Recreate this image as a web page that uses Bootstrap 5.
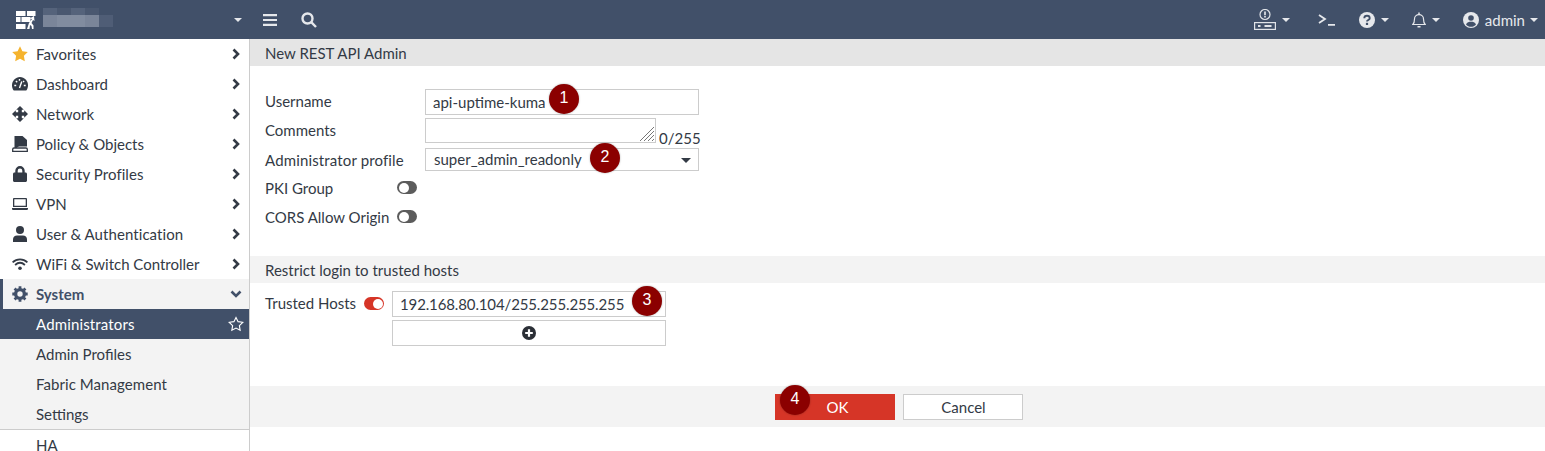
<!DOCTYPE html>
<html lang="en"><head><meta charset="utf-8"><title>New REST API Admin</title>
<link href="https://cdn.jsdelivr.net/npm/bootstrap@5.3.0/dist/css/bootstrap.min.css" rel="stylesheet">
<style>
html,body{height:451px;overflow:hidden;background:#fff;}
body{font-family:Lato,"Liberation Sans",sans-serif;font-size:15px;color:#333a45;line-height:18px;}
.top-bar{height:39px;background:#415069;color:#e6e8ec;}
.brand-zone{width:249px;padding-left:16px;flex:none;}
.fort-logo{width:20px;height:18px;flex:none;}
.blur-name{margin-left:7px;width:70px;display:grid;grid-template-columns:14px 14px 14px 14px 14px;grid-template-rows:7px 12px;margin-top:-4px;}
.bz1{background:#55637b;}.bz2{background:#4a5870;}.bz3{background:#7a8599;}.bz4{background:#818c9f;}.bz5{background:#4f5d76;}.bz0{background:transparent;}
.caret-w{width:0;height:0;border-left:4px solid transparent;border-right:4px solid transparent;border-top:4px solid #e6e8ec;flex:none;}
.c-brand{margin-right:7px;}
.t-menu{margin-left:14px;}.t-search{margin-left:24px;}
.t-server{margin-right:6px;}.t-term{margin-left:28px;}.t-help{margin-left:24px;margin-right:6px;}
.t-bell{margin-left:23px;margin-right:6px;}.t-user{margin-left:23px;margin-right:6px;}.t-name{margin-right:5px;}.c-last{margin-right:7px;}
.body-row{height:412px;}
.side-col{width:250px;flex:none;border-right:1px solid #ccc;overflow:hidden;}
.side-item{height:30px;padding:0 8px 0 12px;}
.ico{width:16px;height:16px;margin-right:8px;flex:none;fill:#333a45;}
.ico-star{fill:#f5b32e;}
.ico-sys{fill:none;stroke:#415069;}
.ico-line{fill:none;stroke:#333a45;stroke-width:1.800;}
.side-item .lbl{flex:1;}
.chev{width:10px;height:12px;fill:none;stroke:#333a45;stroke-width:2.600;flex:none;}
.chev-down{width:12px;stroke:#415069;margin-right:-1px;}
.side-open{background:#f3f3f3;border-left:3px solid #415069;padding-left:9px;font-weight:700;color:#415069;}
.side-sub{background:#f3f3f3;padding-left:36px;}
.side-active{background:#415069;color:#fff;padding-right:5px;}
.fav-off{fill:none;stroke:#fff;stroke-width:1.200;flex:none;}
.side-sep{border-top:1px solid #ccc;height:31px;padding-left:36px;}
.wide-1{letter-spacing:.07px;}.wide-2{letter-spacing:.14px;}.tight-1{letter-spacing:-.13px;}
.main-col{flex:1;min-width:0;position:relative;}
.head-a{height:27px;background:#e5e5e5;padding-left:15px;}
.head-b{height:27px;background:#f3f3f3;padding-left:15px;margin-top:25px;}
.form-a{padding:23px 0 0 15px;}
.form-b{padding:8px 0 0 15px;}
.lbl-col{width:160px;flex:none;}
.lift-2{margin-top:-2px;}.drop-3{margin-top:3px;}
.fld{border:1px solid #ccc;background:#fff;padding:0 7px;color:#333a45;}
.fld-sel{padding:0 8px;}
.w-fld{width:274px;}
.row-user{height:26px;}
.row-comm{height:25px;margin-top:3px;}
.fld-area{width:231px;}
.count-txt{margin:11px 0 0 3px;white-space:nowrap;}
.row-prof{height:23px;margin-top:5px;}
.txt-up{margin-top:-1px;}
.caret-sel{width:0;height:0;border-left:5px solid transparent;border-right:5px solid transparent;border-top:5px solid #333a45;margin-right:-1px;margin-top:1px;}
.row-pki{height:29px;margin-top:2px;}
.row-cors{height:29px;}
.lbl-tog{width:132px;white-space:nowrap;}
.toggle-off,.toggle-on{width:20px;height:13px;border-radius:7px;position:relative;flex:none;display:block;}
.toggle-off{background:#5c5c5c;}
.toggle-on{background:#d63527;}
.toggle-off::after,.toggle-on::after{content:"";position:absolute;top:1.500px;width:10px;height:10px;border-radius:50%;background:#fff;}
.toggle-off::after{left:1.500px;}.toggle-on::after{right:1.500px;}
.grip{position:absolute;right:0;bottom:0;width:16px;height:16px;stroke:#777;stroke-width:1;}
.lbl-host{width:99px;margin-top:3px;}
.tog-host{margin-top:6px;}
.host-stack{margin-left:8px;gap:3px;}
.fld-host{height:26px;}
.foot-bar{height:41px;background:#f3f3f3;margin-top:40px;gap:8px;padding-left:2px;}
.act-btn{width:120px;height:26px;border-radius:0;font-size:15px;line-height:24px;}
.act-ok{background:#d63527;border:1px solid #d63527;color:#fff;padding:0 0 0 6px;}
.act-cancel{background:#fff;border:1px solid #ccc;color:#333a45;padding:0 0 0 2px;}
.pin{position:absolute;width:30px;height:30px;border-radius:50%;background:#8b0000;color:#fff;font-family:"Liberation Sans",sans-serif;font-size:16px;line-height:28px;text-align:center;box-shadow:0 0 2px rgba(0,0,0,.35);}
.pin-1{left:299px;top:45px;}.pin-2{left:340px;top:104px;}.pin-3{left:382px;top:247px;}.pin-4{left:530px;top:346px;}
</style></head><body>
<nav class="top-bar d-flex align-items-center">
 <div class="brand-zone d-flex align-items-center">
  <svg class="fort-logo" viewBox="0 0 20 18"><g fill="#fff"><rect x="0" y="0" width="9.500" height="5"/><rect x="11" y="0" width="8.500" height="5"/><rect x="0" y="6" width="4.500" height="5"/><rect x="5.500" y="6" width="9" height="5"/><rect x="0" y="13" width="9.500" height="5"/><path d="M11 18l2-6 3-4-2.500-.5L18 5l.5 5-1.500-1-1.500 3 2 2.500V18h-1.500l-.5-3-1.500-1-.5 4z"/></g></svg>
  <div class="blur-name"><span class="bz1"></span><span class="bz2"></span><span class="bz1"></span><span class="bz2"></span><span class="bz0"></span><span class="bz3"></span><span class="bz4"></span><span class="bz4"></span><span class="bz3"></span><span class="bz5"></span></div>
  <span class="flex-grow-1"></span><span class="caret-w c-brand"></span>
 </div>
 <svg class="t-menu" width="14" height="12" viewBox="0 0 14 12"><path d="M0 1.100h14M0 6h14M0 10.900h14" stroke="#e6e8ec" stroke-width="2.200"/></svg>
 <svg class="t-search" width="16" height="16" viewBox="0 0 16 16" fill="none" stroke="#e6e8ec" stroke-width="2.400"><circle cx="6.500" cy="6.500" r="5"/><path d="M10.200 10.200L15 15"/></svg>
 <span class="flex-grow-1"></span>
 <svg class="t-server" width="22" height="21" viewBox="0 0 22 21" fill="none" stroke="#e0e3e8" stroke-width="1.200"><circle cx="11" cy="5.500" r="5"/><path d="M11 2.500v3.700M11 7v1.500" stroke-width="1.700"/><rect x=".6" y="13.600" width="20.800" height="6.800"/><path d="M4 17h2.500M10.500 17h7" stroke-width="2.200"/></svg>
 <span class="caret-w"></span>
 <svg class="t-term" width="17" height="12" viewBox="0 0 17 12" fill="none" stroke="#e6e8ec" stroke-width="1.800"><path d="M1 1l6 4-6 4M10 10.800h7"/></svg>
 <svg class="t-help" width="16" height="16" viewBox="0 0 16 16"><circle cx="8" cy="8" r="8" fill="#e6e8ec"/><path d="M5.300 6.200c0-3.200 5.400-3.200 5.400 0 0 1.800-2.700 1.700-2.700 3.300" fill="none" stroke="#415069" stroke-width="1.900"/><rect x="6.900" y="10.800" width="2.200" height="2.200" fill="#415069"/></svg>
 <span class="caret-w"></span>
 <svg class="t-bell" width="14" height="16" viewBox="0 0 14 16" fill="none" stroke="#e6e8ec" stroke-width="1.200"><path d="M.8 12.500c1.700-1.700 1.700-3.300 1.700-5.500 0-2.500 2-4.300 4.500-4.300s4.500 1.800 4.500 4.300c0 2.200 0 3.800 1.700 5.500z"/><path d="M7 2.700V.5M5.500 14.800h3" stroke-width="1.500"/></svg>
 <span class="caret-w"></span>
 <svg class="t-user" width="16" height="16" viewBox="0 0 16 16"><circle cx="8" cy="8" r="8" fill="#e6e8ec"/><circle cx="8" cy="6" r="2.800" fill="#415069"/><path d="M3 12.500c1-2.500 3-2.800 5-2.800s4 .3 5 2.800c-1.300 1.500-3 2.300-5 2.300s-3.700-.8-5-2.300z" fill="#415069"/></svg>
 <span class="t-name">admin</span>
 <span class="caret-w c-last"></span>
</nav>
<div class="body-row d-flex">
 <aside class="side-col">
  <div class="side-item d-flex align-items-center"><svg class="ico ico-star" viewBox="0 0 16 16"><path d="M8 .3l2.400 4.900 5.400.8-3.900 3.800.9 5.400L8 12.700l-4.800 2.500.9-5.400L.2 6l5.400-.8z"/></svg><span class="lbl wide-1">Favorites</span><svg class="chev" viewBox="0 0 10 12"><path d="M2.500 1.500L7 6l-4.500 4.500"/></svg></div>
  <div class="side-item d-flex align-items-center"><svg class="ico" viewBox="0 0 16 16"><path d="M8 1C3.600 1 0 4.700 0 9.200c0 1.800.5 3.400 1.300 4.700.3.400.7.600 1.200.6h11c.5 0 .9-.2 1.200-.6.800-1.300 1.300-2.900 1.300-4.700C16 4.700 12.400 1 8 1z"/><path d="M7.500 12l2.300-6.500M2.300 9.500H4.200M11.800 9.500h1.900M3.900 5l1.300 1.300M7.500 2.900v1.800M12.100 5l-.9.900" stroke="#fff" stroke-width="1.400" fill="none"/></svg><span class="lbl wide-1">Dashboard</span><svg class="chev" viewBox="0 0 10 12"><path d="M2.500 1.500L7 6l-4.500 4.500"/></svg></div>
  <div class="side-item d-flex align-items-center"><svg class="ico" viewBox="0 0 16 16"><path d="M8 0l3.800 3.800H9.800v2.400h2.400V4.200L16 8l-3.800 3.800V9.800H9.800v2.400h2L8 16l-3.800-3.800h2V9.800H3.800v2L0 8l3.800-3.800v2h2.400V3.800h-2z"/></svg><span class="lbl wide-1">Network</span><svg class="chev" viewBox="0 0 10 12"><path d="M2.500 1.500L7 6l-4.500 4.500"/></svg></div>
  <div class="side-item d-flex align-items-center"><svg class="ico" viewBox="0 0 16 16"><path d="M2.500 0h8L15 4v6.500H7.500c-1.500 0-2.500 1-3 1.800l-2-.5z"/><path d="M.7 15.300v-2c0-.8.600-1.300 1.300-1.300h12c.8 0 1.300.5 1.300 1.300v2z" fill="#fff" stroke="#333a45" stroke-width="1.300"/></svg><span class="lbl">Policy &amp; Objects</span><svg class="chev" viewBox="0 0 10 12"><path d="M2.500 1.500L7 6l-4.500 4.500"/></svg></div>
  <div class="side-item d-flex align-items-center"><svg class="ico" viewBox="0 0 16 16"><path fill-rule="evenodd" d="M3.300 6.500V4.700a4.700 4.700 0 019.400 0v1.800h.8c.8 0 1.500.7 1.500 1.500v6.500c0 .8-.7 1.500-1.500 1.500h-11C1.700 16 1 15.300 1 14.500V8c0-.8.700-1.500 1.500-1.500zm2.400 0h4.600V4.700a2.300 2.300 0 00-4.600 0z"/></svg><span class="lbl wide-1">Security Profiles</span><svg class="chev" viewBox="0 0 10 12"><path d="M2.500 1.500L7 6l-4.500 4.500"/></svg></div>
  <div class="side-item d-flex align-items-center"><svg class="ico" viewBox="0 0 16 16"><path fill-rule="evenodd" d="M2 2h12c.5 0 1 .5 1 1v8H1V3c0-.5.500-1 1-1zm.3 1.300v6.400h11.400V3.300zM0 12h16v.8c0 .8-.6 1.200-1.300 1.200H1.300C.6 14 0 13.600 0 12.800z"/></svg><span class="lbl">VPN</span><svg class="chev" viewBox="0 0 10 12"><path d="M2.500 1.500L7 6l-4.500 4.500"/></svg></div>
  <div class="side-item d-flex align-items-center"><svg class="ico" viewBox="0 0 16 16"><circle cx="8" cy="4" r="4"/><path d="M1 16v-2.700C1 11 2.800 9.500 5 9.500h6c2.200 0 4 1.500 4 3.800V16z"/></svg><span class="lbl wide-1">User &amp; Authentication</span><svg class="chev" viewBox="0 0 10 12"><path d="M2.500 1.500L7 6l-4.500 4.500"/></svg></div>
  <div class="side-item d-flex align-items-center"><svg class="ico" viewBox="0 0 16 16"><path class="ico-line" d="M.6 6.300c4.300-4 10.500-4 14.800 0M3.100 9c3-2.700 6.800-2.700 9.800 0"/><circle cx="8" cy="12.300" r="1.800"/></svg><span class="lbl">WiFi &amp; Switch Controller</span><svg class="chev" viewBox="0 0 10 12"><path d="M2.500 1.500L7 6l-4.500 4.500"/></svg></div>
  <div class="side-item side-open d-flex align-items-center"><svg class="ico ico-sys" viewBox="0 0 16 16"><circle cx="8" cy="8" r="4.400" stroke-width="3.400"/><path d="M8 .3v2.500M8 13.200v2.500M.3 8h2.500M13.200 8h2.500M2.600 2.600l1.700 1.700M11.700 11.700l1.700 1.700M2.600 13.400l1.700-1.700M11.700 4.300l1.700-1.700" stroke-width="2.800"/></svg><span class="lbl">System</span><svg class="chev chev-down" viewBox="0 0 12 10"><path d="M1.500 2.500L6 7l4.500-4.500"/></svg></div>
  <div class="side-item side-sub side-active d-flex align-items-center"><span class="lbl wide-2">Administrators</span><svg class="fav-off" width="16" height="16" viewBox="0 0 17 17"><path d="M8.500 1.500l2.200 4.500 5 .7-3.600 3.500.8 5-4.400-2.400-4.400 2.400.8-5L1.300 6.700l5-.7z"/></svg></div>
  <div class="side-item side-sub d-flex align-items-center">Admin Profiles</div>
  <div class="side-item side-sub d-flex align-items-center wide-1">Fabric Management</div>
  <div class="side-item side-sub d-flex align-items-center">Settings</div>
  <div class="side-sep d-flex align-items-center">HA</div>
 </aside>
 <main class="main-col">
  <div class="head-a d-flex align-items-center">New REST API Admin</div>
  <div class="form-a">
   <div class="d-flex align-items-center row-user"><div class="lbl-col lift-2">Username</div><div class="fld w-fld d-flex align-items-center h-100">api-uptime-kuma</div></div>
   <div class="d-flex align-items-start row-comm"><div class="lbl-col drop-3">Comments</div><div class="fld fld-area h-100 position-relative"><svg class="grip" viewBox="0 0 16 16"><path d="M1 15L15 1M5 15L15 5M9 15l6-6M13 15l2-2"/></svg></div><span class="count-txt">0/255</span></div>
   <div class="d-flex align-items-center row-prof"><div class="lbl-col wide-2">Administrator profile</div><div class="fld fld-sel w-fld d-flex align-items-center h-100 justify-content-between"><span class="txt-up">super_admin_readonly</span><span class="caret-sel"></span></div></div>
   <div class="d-flex align-items-center row-pki"><div class="lbl-tog">PKI Group</div><span class="toggle-off"></span></div>
   <div class="d-flex align-items-center row-cors"><div class="lbl-tog">CORS Allow Origin</div><span class="toggle-off"></span></div>
  </div>
  <div class="head-b d-flex align-items-center">Restrict login to trusted hosts</div>
  <div class="form-b d-flex">
   <div class="lbl-host">Trusted Hosts</div>
   <span class="toggle-on tog-host"></span>
   <div class="d-flex flex-column host-stack">
    <div class="fld w-fld d-flex align-items-center fld-host tight-1">192.168.80.104/255.255.255.255</div>
    <div class="fld w-fld d-flex align-items-center justify-content-center fld-host"><svg width="14" height="14" viewBox="0 0 14 14"><circle cx="7" cy="7" r="7" fill="#2b2f36"/><path d="M7 3.200v7.600M3.200 7h7.600" stroke="#fff" stroke-width="2.200"/></svg></div>
   </div>
  </div>
  <div class="foot-bar d-flex align-items-center justify-content-center"><button class="btn act-btn act-ok" type="button">OK</button><button class="btn act-btn act-cancel" type="button">Cancel</button></div>
  <span class="pin pin-1">1</span>
  <span class="pin pin-2">2</span>
  <span class="pin pin-3">3</span>
  <span class="pin pin-4">4</span>
 </main>
</div>
</body></html>
